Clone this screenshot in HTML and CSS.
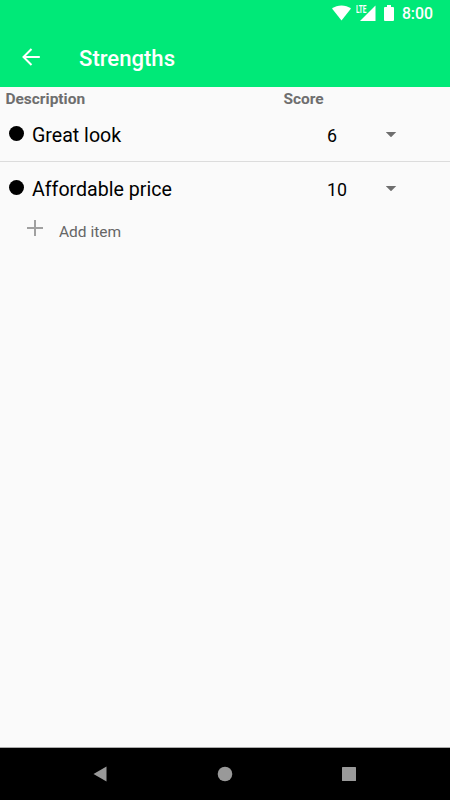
FILE: index.html
```html
<!DOCTYPE html>
<html lang="en">
<head>
  <meta charset="UTF-8" />
  <meta name="viewport" content="width=device-width, initial-scale=1.0" />
  <title>Strengths</title>
  <link rel="stylesheet" href="styles.css">
</head>
<body>
  <header>
    <div class="status-bar">
      <svg class="wifi" width="20" height="16" viewBox="0 0 20 16"><path d="M0 3.600C5.500-.7 13.500-.7 19 3.600L9.500 15.500z" /></svg>
      <div class="signal">
        <svg width="16" height="16" viewBox="0 0 16 16"><path d="M15.500.5v15.500H0z" /></svg>
        <span class="lte">LTE</span>
      </div>
      <svg class="battery" width="10" height="17" viewBox="0 0 10 17"><path d="M3 0h4v2h2q1 0 1 1v12q0 1-1 1H1q-1 0-1-1V3q0-1 1-1h2z" /></svg>
      <span class="clock">8:00</span>
    </div>
    <div class="toolbar">
      <svg class="back" width="18" height="18" viewBox="0 0 18 18"><path d="M17.800 9H1.500M9.500 1L1.500 9l8 8" /></svg>
      <h1>Strengths</h1>
    </div>
  </header>

  <main>
    <div class="columns">
      <span>Description</span>
      <span>Score</span>
    </div>
    <div class="item">
      <span class="bullet"></span>
      <span class="name">Great look</span>
      <span class="score">6</span>
      <span class="arrow"></span>
    </div>
    <div class="item">
      <span class="bullet"></span>
      <span class="name">Affordable price</span>
      <span class="score">10</span>
      <span class="arrow"></span>
    </div>
    <div class="add-item">
      <svg width="16" height="16" viewBox="0 0 16 16"><path d="M8 0v16M0 8h16" /></svg>
      <span>Add item</span>
    </div>
  </main>

  <nav>
    <svg width="14" height="16" viewBox="0 0 14 16"><path d="M13.500 .5v15L.5 8z" /></svg>
    <svg width="16" height="16" viewBox="0 0 16 16"><circle cx="8" cy="8" r="7.300" /></svg>
    <svg width="14" height="14" viewBox="0 0 14 14"><rect width="14" height="14" rx="0.500" /></svg>
  </nav>
</body>
</html>
```
FILE: styles.css
```css
* {
  box-sizing: border-box;
}

body {
  margin: 0;
  height: 100vh;
  display: flex;
  flex-direction: column;
  font-family: Roboto, sans-serif;
  background-color: #fafafa;
  color: #000;
}

svg {
  display: block;
  flex-shrink: 0;
}

header {
  height: 87px;
  background-color: #00e978;
  color: #fff;
}

.status-bar {
  height: 27px;
  display: flex;
  align-items: flex-start;
  justify-content: flex-end;
  padding: 5px 17px 0 0;
  fill: #fff;
}

.signal {
  position: relative;
  margin-left: 8px;
}

.lte {
  position: absolute;
  left: -4px;
  top: 0;
  font-size: 10px;
  line-height: 9px;
  font-weight: 700;
  transform: scaleX(0.65);
  transform-origin: left;
}

.battery {
  margin-left: 8px;
}

.clock {
  margin-left: 8px;
  font-size: 15.8px;
  line-height: 18px;
  font-weight: 500;
}

.toolbar {
  height: 60px;
  display: flex;
  align-items: center;
  padding-left: 22px;
}

.back {
  fill: none;
  stroke: #fff;
  stroke-width: 2;
}

h1 {
  margin: 2px 0 0 39px;
  font-size: 22.1px;
  line-height: 28px;
  font-weight: 500;
}

main {
  flex: 1;
}

.columns {
  display: grid;
  grid-template-columns: 278px 1fr;
  height: 21px;
  padding: 3px 0 0 5.4px;
  font-size: 15.5px;
  line-height: 18px;
  font-weight: 700;
  color: #6e6e6e;
}

.item {
  height: 53px;
  display: grid;
  grid-template-columns: 23px 295px 58px 1fr;
  align-items: center;
  padding-left: 9px;
  font-size: 19.6px;
}

.item + .item {
  height: 54px;
  border-top: 1px solid #dcdcdc;
}

.bullet {
  width: 15px;
  height: 15px;
  border-radius: 50%;
  background-color: #000;
  margin-bottom: 2px;
}

.name,
.score {
  padding-top: 2px;
}

.score {
  font-size: 17.8px;
}

.arrow {
  width: 11px;
  height: 5.5px;
  margin-left: 0.5px;
  background-color: #6e6e6e;
  clip-path: polygon(0 0, 100% 0, 50% 100%);
}

.add-item {
  display: flex;
  align-items: center;
  height: 32px;
  padding-left: 27px;
  font-size: 15.5px;
  color: #666;
}

.add-item svg {
  margin: 0 16px 7px 0;
  fill: none;
  stroke: #a0a0a0;
  stroke-width: 2;
}

.add-item span {
  padding-top: 2px;
}

nav {
  height: 53px;
  display: flex;
  justify-content: space-between;
  align-items: center;
  padding: 0 94px 0 93px;
  border-top: 1px solid #aaa;
  background-color: #000;
  fill: #999;
}
```
